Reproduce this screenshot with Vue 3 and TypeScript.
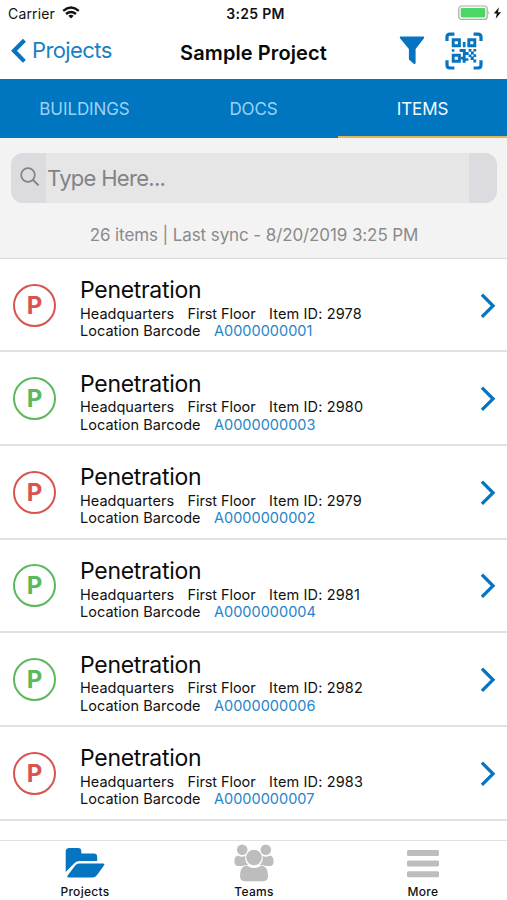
<script setup lang="ts">
interface Item {
  id: number
  barcode: string
  status: 'open' | 'done'
}

const tabs: string[] = ['BUILDINGS', 'DOCS', 'ITEMS']
const activeTab = 'ITEMS'

const items: Item[] = [
  { id: 2978, barcode: 'A0000000001', status: 'open' },
  { id: 2980, barcode: 'A0000000003', status: 'done' },
  { id: 2979, barcode: 'A0000000002', status: 'open' },
  { id: 2981, barcode: 'A0000000004', status: 'done' },
  { id: 2982, barcode: 'A0000000006', status: 'done' },
  { id: 2983, barcode: 'A0000000007', status: 'open' },
]
</script>

<template>
  <div class="screen">
    <div class="status-bar">
      <div class="carrier">
        <span>Carrier</span>
        <svg width="18" height="13" viewBox="0 0 18 13" fill="none" stroke="#111" stroke-width="2.4">
          <path d="M1.2 4.9Q9-1.7 16.8 4.9" />
          <path d="M4 8Q9 3.8 14 8" />
          <path d="M6.3 9.7Q9 7.7 11.7 9.7L9 12.6Z" fill="#111" stroke="none" />
        </svg>
      </div>
      <div class="clock">3:25 PM</div>
      <div class="power">
        <svg width="45" height="16" viewBox="0 0 45 16">
          <rect x=".8" y="1" width="28.4" height="13.4" rx="3" fill="#fff" stroke="#a9a9a9" stroke-width="1.2" />
          <rect x="2.7" y="2.9" width="24.6" height="9.6" rx="1.4" fill="#4bd764" />
          <path d="M30.4 5.4q1.8 2.2 0 4.6z" fill="#a9a9a9" />
          <path d="M41 2.2L35.8 8.6h3l-1.1 5.2 5.3-6.6h-3.1z" fill="#111" />
        </svg>
      </div>
    </div>

    <header class="nav-bar">
      <button class="back">
        <svg width="16" height="26" viewBox="0 0 16 26" fill="none" stroke="#0674bf" stroke-width="4.2">
          <path d="M14.4 2.2L4 12.8L14.4 23.4" />
        </svg>
        <span>Projects</span>
      </button>
      <h1>Sample Project</h1>
      <div class="actions">
        <svg class="filter" width="26" height="29" viewBox="0 0 26 29" fill="#0674bf">
          <path d="M1.3.5h23.4q1 .9.3 1.8L16.6 13v14.3q-.6 1.2-1.9.5l-4.2-3.7q-.6-.6-.6-1.4V13L1 2.3Q.3 1.2 1.3.5z" />
        </svg>
        <svg class="qr" width="38" height="38" viewBox="0 0 38 38" fill="#0674bf">
          <path d="M2 9V5.200q0-3 3-3h4.400M28.600 2.200h4.400q3 0 3 3V9M2 28.200v4.800q0 3 3 3h4.400M28.600 36h4.400q3 0 3-3v-4.800" fill="none" stroke="#0674bf" stroke-width="3.200" />
          <path d="M8.200 7.700h6.200v6h-6.200zM23.800 7.700h6v6h-6zM8.200 23.300h6.200v6h-6.200z" fill="none" stroke="#0674bf" stroke-width="2.900" />
          <path d="M17.800 10h2.700v5.200h-2.700zM6.800 17.200h2.600v2.500H6.800zM14.600 17h6.200v3h2.800v3h-3v3.200h2.800v2.600h-2.800v2h-3v-3.200h-1.700v-2.800h2V20h-3.300zM23.600 17h2.800v2.700h-2.800zM28.400 17h2.800v2.600h-2.800zM26 19.600h2.800v2.800H26zM23.600 22.400h2.800V25h-2.800zM28.400 22.200h2.800V25h-2.800zM25.600 24.600h3.200v3h2.400v2.800h-2.800V28h-2.800z" />
        </svg>
      </div>
    </header>

    <nav class="tabs">
      <button v-for="tab in tabs" :key="tab" :class="['tab', { active: tab === activeTab }]">{{ tab }}</button>
    </nav>

    <section class="search-area">
      <div class="search">
        <span class="search-lead">
          <svg width="20" height="20" viewBox="0 0 20 20" fill="none" stroke="#838387" stroke-width="1.7">
            <circle cx="8" cy="8" r="6.8" />
            <path d="M12.800 12.800L18.600 18.400" stroke-width="2" />
          </svg>
        </span>
        <span class="search-field">Type Here...</span>
        <span class="search-trail"></span>
      </div>
      <p class="sync">26 items | Last sync - 8/20/2019 3:25 PM</p>
    </section>

    <main class="list">
      <article v-for="item in items" :key="item.id" class="row">
        <div :class="['badge', item.status]">P</div>
        <div class="details">
          <h2>Penetration</h2>
          <div class="line meta">
            <span>Headquarters</span><span class="floor">First Floor</span><span class="item-id">Item ID: {{ item.id }}</span>
          </div>
          <div class="line location">
            <span class="label">Location Barcode</span><span class="code">{{ item.barcode }}</span>
          </div>
        </div>
        <svg class="chevron" width="16" height="26" viewBox="0 0 16 26" fill="none" stroke="#0674bf" stroke-width="3.300">
          <path d="M1.900 1.700L13 12.800L1.900 23.900" />
        </svg>
      </article>
    </main>

    <footer class="tab-bar">
      <div class="dest">
        <svg class="folder" width="40" height="32" viewBox="0 0 40 32" fill="#0674bf">
          <path d="M.7 25V4.500Q.7 1 4.200 1H13q3.300 0 3.300 3.300v2.200h12.500q3.400 0 3.400 3.400v4.200H15q-4 0-6.400 3z" />
          <path d="M14.300 16.500H38q2.400 0 .9 2.100l-7 9.600q-1.700 2.300-4.500 2.300H4q-3 0-1-2.600l7-9.200q1.700-2.200 4.300-2.200z" />
        </svg>
        <span>Projects</span>
      </div>
      <div class="dest">
        <svg class="people" width="40" height="38" viewBox="0 0 40 38" fill="#bdbdbd">
          <circle cx="8.200" cy="5.800" r="5.300" />
          <circle cx="31.800" cy="5.800" r="5.300" />
          <path d="M3.700 11.400q4.600 2.300 7.700.3-.9 6 2.900 9.200-4.200.1-5.800 1.100H3.300Q.4 21 .4 17.400q0-5 3.300-6z" />
          <path d="M36.300 11.400q-4.600 2.300-7.700.3.9 6-2.900 9.200 4.200.1 5.800 1.100h5.200q2.900-1 2.900-4.600 0-5-3.300-6z" />
          <circle cx="20" cy="13.500" r="7.800" />
          <path d="M12.600 21.400q7.400 5 14.800 0 6.600.8 6.600 10.600 0 5.200-4.400 5.200H10.400Q6 37.200 6 32q0-9.800 6.600-10.600z" />
        </svg>
        <span>Teams</span>
      </div>
      <div class="dest">
        <svg class="bars" width="32" height="28" viewBox="0 0 32 28" fill="#bdbdbd">
          <rect width="32" height="6" y="0" rx="1.500" />
          <rect width="32" height="6" y="10.600" rx="1.500" />
          <rect width="32" height="6" y="21.200" rx="1.500" />
        </svg>
        <span>More</span>
      </div>
    </footer>
  </div>
</template>

<style>
body {
  margin: 0;
  background: #fff;
}
</style>

<style scoped>
.screen {
  width: 507px;
  height: 900px;
  overflow: hidden;
  display: flex;
  flex-direction: column;
  background: #fff;
  color: #111;
  font-family: Inter, 'Liberation Sans', sans-serif;
}
button {
  border: 0;
  background: none;
  padding: 0;
  font: inherit;
}
h1,
h2,
p {
  margin: 0;
  font-weight: 400;
}
svg {
  display: block;
  flex: none;
}
.status-bar {
  height: 27px;
  flex: none;
  display: grid;
  grid-template-columns: 1fr auto 1fr;
  box-sizing: border-box;
  padding: 0 4px;
  font-size: 14px;
  line-height: 27px;
}
.carrier {
  display: flex;
  gap: 7px;
  padding-left: 4px;
  letter-spacing: 0.15px;
}
.carrier svg {
  margin-top: 6px;
}
.clock {
  font-weight: 600;
  letter-spacing: 0.3px;
  padding-left: 4px;
}
.power {
  display: flex;
  justify-content: flex-end;
}
.power svg {
  margin-top: 5px;
}
.nav-bar {
  height: 52px;
  flex: none;
  display: grid;
  grid-template-columns: 1fr auto 1fr;
  box-sizing: border-box;
  padding: 0 10px;
}
.back {
  display: flex;
  align-items: flex-start;
  gap: 6px;
  color: #1a80c6;
  font-size: 22px;
  letter-spacing: -0.6px;
  line-height: 46px;
}
.back svg {
  margin-top: 11px;
}
h1 {
  color: #080808;
  font-size: 20px;
  font-weight: 600;
  letter-spacing: 0.1px;
  line-height: 52px;
}
.actions {
  display: flex;
  justify-content: flex-end;
  gap: 20px;
  padding-right: 14px;
}
.filter {
  margin-top: 9px;
}
.qr {
  margin-top: 5px;
}
.tabs {
  height: 59px;
  flex: none;
  display: grid;
  grid-template-columns: repeat(3, 1fr);
  background: #0076c1;
}
.tab {
  color: #9bd2f3;
  font-size: 17px;
  letter-spacing: -0.1px;
  line-height: 57px;
  padding-top: 2px;
  height: 59px;
  box-sizing: border-box;
  border-bottom: 2px solid transparent;
}
.tab.active {
  color: #f4fbff;
  border-bottom-color: #e2b75c;
}
.search-area {
  height: 120px;
  flex: none;
  box-sizing: border-box;
  padding: 15px 10px 0 11px;
  background: #f3f3f3;
}
.search {
  height: 50px;
  display: flex;
  overflow: hidden;
  border-radius: 12px;
  background: #e6e6e6;
}
.search-lead {
  width: 35px;
  background: #dcdce0;
}
.search-lead svg {
  margin: 14px 0 0 9px;
}
.search-field {
  flex: 1;
  padding-left: 1px;
  color: #838387;
  font-size: 22px;
  letter-spacing: -0.7px;
  line-height: 50px;
}
.search-trail {
  width: 28px;
  background: #dcdce0;
}
.sync {
  color: #8a8a8a;
  font-size: 17px;
  letter-spacing: -0.1px;
  line-height: 30px;
  margin-top: 17px;
  text-align: center;
}
.list {
  height: 582px;
  flex: none;
  box-sizing: border-box;
}
.row {
  height: 93.65px;
  display: flex;
  box-sizing: border-box;
  border-bottom: 2px solid #e1e1e1;
  padding: 0 11px 0 13px;
}
.row:first-child {
  height: 94.4px;
  border-top: 1px solid #d9d9d9;
}
.badge {
  width: 43px;
  height: 43px;
  flex: none;
  box-sizing: border-box;
  margin-top: 24.8px;
  border: 2px solid;
  border-radius: 50%;
  font-size: 24px;
  font-weight: 700;
  line-height: 40px;
  text-align: center;
}
.badge.open {
  color: #d9534f;
}
.badge.done {
  color: #5cb85c;
}
.details {
  flex: 1;
  margin: 17.4px 0 0 24px;
}
h2 {
  color: #0c0c0c;
  font-size: 23px;
  letter-spacing: -0.3px;
  line-height: 28.5px;
}
.line {
  display: flex;
  gap: 13.4px;
  font-size: 14.5px;
  line-height: 17.4px;
  letter-spacing: 0.02px;
  white-space: nowrap;
}
.floor {
  letter-spacing: -0.08px;
}
.item-id {
  letter-spacing: 0.14px;
}
.code {
  color: #2585ca;
}
.chevron {
  margin-top: 33.6px;
}
.tab-bar {
  height: 60px;
  flex: none;
  display: grid;
  grid-template-columns: repeat(3, 1fr);
  box-sizing: border-box;
  border-top: 1px solid #e1e1e1;
  background: #fff;
}
.dest {
  display: flex;
  flex-direction: column;
  align-items: center;
  justify-content: flex-end;
  font-size: 12px;
  font-weight: 500;
  letter-spacing: 0.3px;
}
.dest span {
  padding-left: 1px;
  line-height: 16px;
}
.folder {
  margin-bottom: 5px;
}
.people {
  margin-bottom: 2px;
}
.bars {
  margin-bottom: 6px;
}
</style>
